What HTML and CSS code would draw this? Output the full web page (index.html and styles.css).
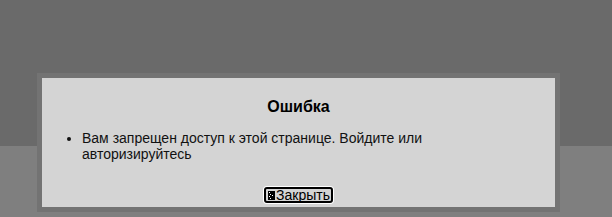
FILE: index.html
```
<!DOCTYPE html>
<html lang="ru">
<head>
    <meta charset="UTF-8">
    <meta name="viewport" content="width=device-width, initial-scale=1.0">
    <title>Ошибка</title>
    <link rel="stylesheet" href="styles.css">
</head>
<body>
    <div class="page-top"></div>
    <div class="page-bottom"></div>

    <!-- modal error dialog -->
    <div class="dialog">
        <div class="dialog-body">
            <h2 class="dialog-title">Ошибка</h2>
            <ul class="messages">
                <li>Вам запрещен доступ к этой странице. Войдите или авторизируйтесь</li>
            </ul>
            <div class="actions">
                <button class="close-btn" type="button">
                    <svg class="close-icon" width="7" height="9" viewBox="0 0 7 9">
                        <rect x="0" y="0" width="7" height="9" fill="#000"/>
                        <rect x="1" y="1" width="1" height="1" fill="#fff"/>
                        <rect x="2" y="3" width="1" height="1" fill="#fff"/>
                        <rect x="1" y="5" width="1" height="1" fill="#fff"/>
                        <rect x="2" y="7" width="1" height="1" fill="#fff"/>
                        <rect x="4" y="4" width="1" height="1" fill="#fff"/>
                    </svg>Закрыть
                </button>
            </div>
        </div>
    </div>
</body>
</html>
```

FILE: styles.css
```
body {
    margin: 0;
    font-family: 'Liberation Sans', Arial, sans-serif;
    background-color: #7f7f7f;
}

.page-top {
    height: 146px;
    background-color: #6a6a6a;
}

.page-bottom {
    height: 71px;
    background-color: #7f7f7f;
}

/* Dialog sits over the page */
.dialog {
    position: absolute;
    left: 37px;
    top: 73px;
    width: 513px;
    height: 129px;
    border: 5px solid #737373;
}

.dialog-body {
    height: 100%;
    background-color: #d4d4d4;
    display: flex;
    flex-direction: column;
}

.dialog-title {
    margin: 19px 0 0;
    text-align: center;
    font-size: 16px;
    font-weight: bold;
    line-height: 19px;
    color: #000;
}

.messages {
    margin: 14px 0 0;
    padding: 0 0 0 40px;
    width: 360px;
    font-size: 14px;
    line-height: 16px;
    color: #111;
}

.actions {
    margin-top: auto;
    padding-bottom: 4px;
    display: flex;
    justify-content: center;
}

.close-btn {
    display: flex;
    align-items: center;
    gap: 1px;
    padding: 0 1px 0 2px;
    height: 16px;
    font-family: 'Liberation Sans', Arial, sans-serif;
    font-size: 14px;
    line-height: 14px;
    color: #000;
    background-color: #d4d4d4;
    border: 2px solid #000;
    border-radius: 3px;
    box-shadow: 0 0 0 1px #fff;
    cursor: pointer;
}

.close-icon {
    display: block;
}
```
